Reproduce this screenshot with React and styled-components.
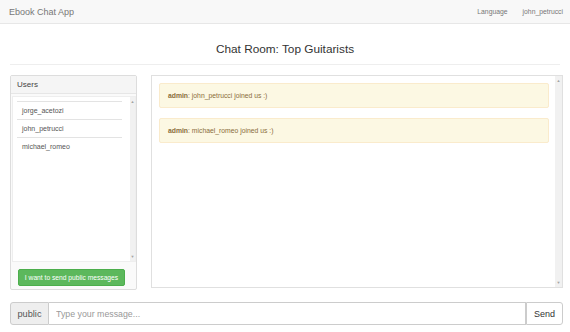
import React from 'react'
import styled, { createGlobalStyle } from 'styled-components'

const GlobalStyle = createGlobalStyle`
  body {
    margin: 0;
    font-family: "Liberation Sans", Arial, sans-serif;
    color: #333;
    background: #fff;
  }
  * { box-sizing: border-box; }
`

const Navbar = styled.div`
  height: 24px;
  background: #f8f8f8;
  border-bottom: 1px solid #e7e7e7;
  display: flex;
  align-items: center;
  justify-content: space-between;
  padding: 0 7px 0 9px;
`

const Brand = styled.div`
  font-size: 9px;
  color: #777;
`

const NavLinks = styled.div`
  display: flex;
  gap: 15px;
  font-size: 6.8px;
  color: #777;
`

const Container = styled.div`
  padding: 0 7px 0 10px;
`

const Title = styled.h3`
  margin: 0 3px 0 0;
  padding-top: 18px;
  height: 41px;
  text-align: center;
  font-weight: normal;
  font-size: 11.8px;
  color: #333;
  border-bottom: 1px solid #eee;
`

const Row = styled.div`
  display: flex;
  margin-top: 10px;
  gap: 14px;
  height: 215px;
`

const Panel = styled.div`
  width: 127px;
  border: 1px solid #ddd;
  border-radius: 2px;
  display: flex;
  flex-direction: column;
  background: #fafafa;
`

const PanelHeading = styled.div`
  height: 18px;
  background: #f5f5f5;
  border-bottom: 1px solid #e6e6e6;
  font-size: 8px;
  color: #444;
  padding-left: 6px;
  display: flex;
  align-items: center;
`

const PanelBody = styled.div`
  flex: 1;
  display: flex;
  flex-direction: column;
  padding: 2px 0 3px 1px;
`

const ScrollBox = styled.div`
  flex: 1;
  display: flex;
  background: #fff;
  border: 1px solid ${p => p.$border};
`

const List = styled.div`
  flex: 1;
  padding: 4px 8px 0 4px;
`

const ListItem = styled.div`
  height: 18px;
  border-top: 1px solid #e3e3e3;
  font-size: 7px;
  color: #555;
  padding-left: 5px;
  display: flex;
  align-items: center;
`

const Track = styled.div`
  width: ${p => p.$w}px;
  background: #f1f1f1;
  display: flex;
  flex-direction: column;
  justify-content: space-between;
  align-items: center;
  font-size: 4px;
  color: #a3a3a3;
  padding: 2px 0;
`

const Footer = styled.div`
  padding: 4px 0 0 6px;
`

const GreenButton = styled.button`
  width: 107px;
  height: 17px;
  background: #5cb85c;
  border: 1px solid #4cae4c;
  border-radius: 2px;
  color: #fff;
  font-family: inherit;
  font-size: 6.7px;
  padding: 0;
`

const Chat = styled.div`
  flex: 1;
  height: 213px;
  display: flex;
  border: 1px solid #e0e0e0;
`

const Messages = styled.div`
  flex: 1;
  padding: 7px 6px 0 7px;
  display: flex;
  flex-direction: column;
  gap: 10px;
`

const Alert = styled.div`
  height: 25px;
  background: #fcf8e3;
  border: 1px solid #faebcc;
  border-radius: 2px;
  color: #8a6d3b;
  font-size: 6.8px;
  padding-left: 8px;
  display: flex;
  align-items: center;
  b { font-weight: bold; }
`

const InputGroup = styled.div`
  display: flex;
  height: 23px;
  margin-top: 12px;
`

const Addon = styled.div`
  width: 39px;
  background: #eee;
  border: 1px solid #ccc;
  border-radius: 3px 0 0 3px;
  font-size: 9.2px;
  color: #555;
  display: flex;
  align-items: center;
  justify-content: center;
`

const Input = styled.input`
  flex: 1;
  border: 1px solid #ccc;
  border-left: none;
  font-family: inherit;
  font-size: 8.8px;
  padding: 0 7px;
  outline: none;
  &::placeholder { color: #999; }
`

const SendButton = styled.button`
  width: 37px;
  background: #fff;
  border: 1px solid #ccc;
  border-radius: 0 3px 3px 0;
  font-family: inherit;
  font-size: 9px;
  color: #333;
  padding: 0;
`

const users = ['jorge_acetozi', 'john_petrucci', 'michael_romeo']
const messages = ['john_petrucci joined us :)', 'michael_romeo joined us :)']

export default function App() {
  return (
    <>
      <GlobalStyle />
      <Navbar>
        <Brand>Ebook Chat App</Brand>
        <NavLinks>
          <span>Language</span>
          <span>john_petrucci</span>
        </NavLinks>
      </Navbar>
      <Container>
        <Title>Chat Room: Top Guitarists</Title>
        <Row>
          <Panel>
            <PanelHeading>Users</PanelHeading>
            <PanelBody>
              <ScrollBox $border="#eee">
                <List>
                  {users.map(u => <ListItem key={u}>{u}</ListItem>)}
                </List>
                <Track $w={5}><span>▲</span><span>▼</span></Track>
              </ScrollBox>
              <Footer>
                <GreenButton>I want to send public messages</GreenButton>
              </Footer>
            </PanelBody>
          </Panel>
          <Chat>
            <Messages>
              {messages.map(m => (
                <Alert key={m}><span><b>admin</b>: {m}</span></Alert>
              ))}
            </Messages>
            <Track $w={7}><span>▲</span><span>▼</span></Track>
          </Chat>
        </Row>
        <InputGroup>
          <Addon>public</Addon>
          <Input placeholder="Type your message..." />
          <SendButton>Send</SendButton>
        </InputGroup>
      </Container>
    </>
  )
}
